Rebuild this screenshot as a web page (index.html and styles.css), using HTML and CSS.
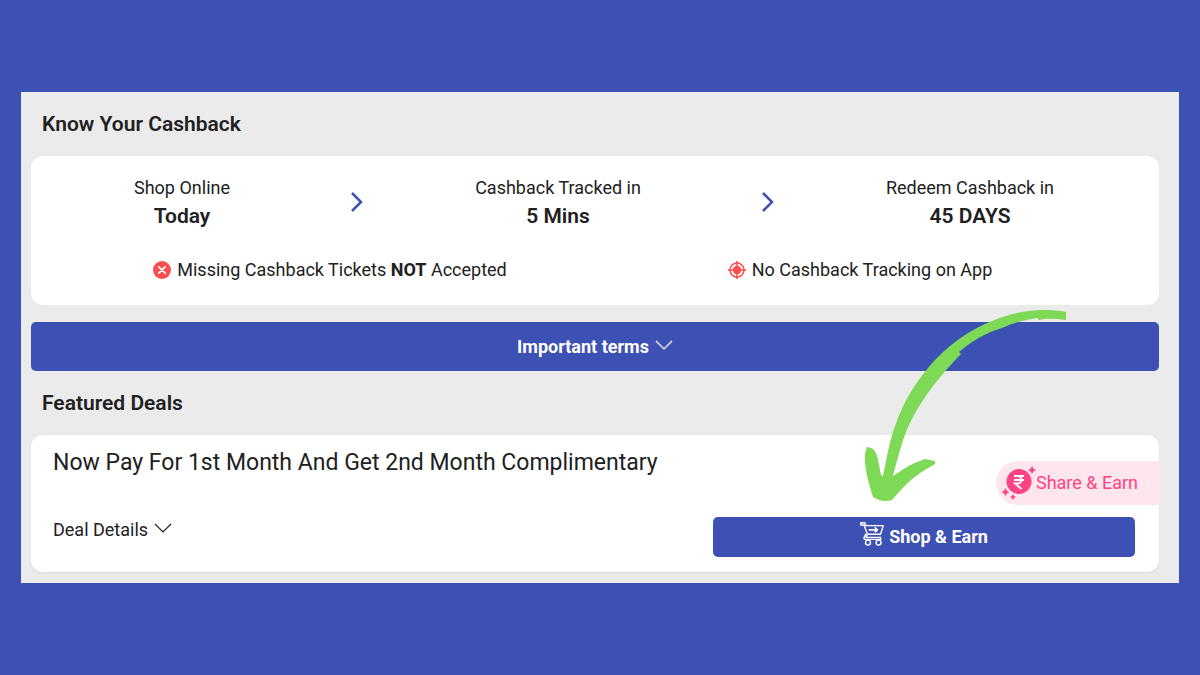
FILE: index.html
```html
<!DOCTYPE html>
<html lang="en">
<head>
    <meta charset="UTF-8">
    <meta name="viewport" content="width=device-width, initial-scale=1.0">
    <title>Know Your Cashback</title>
    <link rel="stylesheet" href="styles.css">
</head>
<body>
    <main class="panel">
        <!-- Cashback info -->
        <h2 class="section-title">Know Your Cashback</h2>
        <section class="card info-card">
            <div class="steps">
                <div class="step">
                    <p>Shop Online</p>
                    <strong>Today</strong>
                </div>
                <svg class="step-arrow" width="14" height="22" viewBox="0 0 14 22"><path d="M2 2l9 9-9 9"/></svg>
                <div class="step">
                    <p>Cashback Tracked in</p>
                    <strong>5 Mins</strong>
                </div>
                <svg class="step-arrow" width="14" height="22" viewBox="0 0 14 22"><path d="M2 2l9 9-9 9"/></svg>
                <div class="step">
                    <p>Redeem Cashback in</p>
                    <strong>45 DAYS</strong>
                </div>
            </div>
            <div class="notes">
                <p class="note">
                    <svg width="18" height="18" viewBox="0 0 18 18">
                        <circle cx="9" cy="9" r="9" fill="#ff4c4f"/>
                        <path d="M5.8 5.8l6.4 6.4M12.2 5.8l-6.4 6.4" stroke="#fff" stroke-width="1.8" stroke-linecap="round"/>
                    </svg>
                    <span>Missing Cashback Tickets <b>NOT</b> Accepted</span>
                </p>
                <p class="note">
                    <svg width="18" height="18" viewBox="0 0 18 18" fill="none" stroke="#ff4c4f" stroke-width="1.5">
                        <circle cx="9" cy="9" r="7"/>
                        <circle cx="9" cy="9" r="4.2" fill="#ff4c4f" stroke="none"/>
                        <path d="M9 0v18M0 9h18"/>
                    </svg>
                    <span>No Cashback Tracking on App</span>
                </p>
            </div>
        </section>

        <button type="button" class="terms-btn">
            Important terms
            <svg class="chevron" width="18" height="10" viewBox="0 0 18 10"><path d="M1 1l8 8 8-8"/></svg>
        </button>

        <!-- Deals -->
        <h2 class="section-title">Featured Deals</h2>
        <section class="card deal-card">
            <h3 class="deal-title">Now Pay For 1st Month And Get 2nd Month Complimentary</h3>
            <div class="deal-actions">
                <button type="button" class="details-btn">
                    Deal Details
                    <svg class="chevron" width="18" height="10" viewBox="0 0 18 10"><path d="M1 1l8 8 8-8"/></svg>
                </button>
                <button type="button" class="shop-btn">
                    <svg class="cart" width="24" height="24" viewBox="0 0 24 24" fill="none" stroke="#fff" stroke-width="1.4" stroke-linejoin="round" stroke-linecap="round">
                        <path d="M.8.8h4l1 2.8h17.4l-2.6 8.6H7.4L4 3H.8zM7.4 12.2L6 15.4h14.6v2H5.4c-1.6 0-1.8-1.2-1.2-2.2l1.4-3"/>
                        <path d="M9.4 7.8h8M15.2 5.8l2.2 2-2.2 2" stroke-width="1.7"/>
                        <circle cx="8" cy="20.6" r="2.5"/>
                        <circle cx="18.6" cy="20.6" r="2.5"/>
                    </svg>
                    <span>Shop &amp; Earn</span>
                </button>
            </div>
            <button type="button" class="share-btn">
                <svg width="35" height="36" viewBox="0 0 35 36">
                    <circle cx="18" cy="16.5" r="12.5" fill="#ff4383"/>
                    <path d="M13 11h10M13 15h10M13 11h3.5c5 0 5 7.5 0 7.5H14l6.5 5.5" fill="none" stroke="#fff" stroke-width="1.8"/>
                    <path fill="#ff4383" d="M31 1q.8 3.2 4 4-3.2.8-4 4-.8-3.2-4-4 3.2-.8 4-4zM4.500 23q.8 3.200 4 4-3.200.8-4 4-.8-3.200-4-4 3.200-.8 4-4zM12 29q.6 2.400 3 3-2.400.6-3 3-.6-2.400-3-3 2.400-.6 3-3z"/>
                </svg>
                Share &amp; Earn
            </button>
            <svg class="hand-arrow" width="206" height="194" viewBox="0 0 206 194">
                <path fill="#7ed957" d="M201 3C180-1 155 1 132 10C105 20 81 37 63 59C43 82 29 111 22 147L18 167L16 166C14 156 13 149 11 144Q8 138 2 138Q-1 145 0 153C1 166 5 178 8 188Q17 194 27 191C38 178 49 166 70 155V152L60 150C47 154 37 161 28 167C32 151 36 136 41 123C51 99 67 75 96 45L94 43C107 32 120 24 137 19C150 13 160 11 172 9L174 11C183 9 192 10 201 11Z"/>
            </svg>
        </section>
    </main>
</body>
</html>
```
FILE: styles.css
```css
* {
    box-sizing: border-box;
}
body {
    margin: 0;
    min-height: 100vh;
    padding: 0 21px;
    display: flex;
    align-items: center;
    background: #3d51b4;
    color: #212121;
    font-family: Roboto, sans-serif;
    font-size: 18px;
    line-height: 24px;
}
h2, h3, p {
    margin: 0;
}
button {
    padding: 0;
    border: 0;
    background: none;
    color: inherit;
    font: inherit;
    cursor: pointer;
}
svg {
    flex: none;
}
.panel {
    width: 100%;
    padding: 0 20px 11px 10px;
    background: #ebebeb;
}
.section-title {
    padding: 0 11px;
    font-size: 21px;
    font-weight: 600;
    line-height: 64px;
}
.card {
    background: #fff;
    border-radius: 12px;
}
.info-card {
    padding: 18px 0 23px;
}
.steps {
    display: grid;
    grid-template-columns: 302fr 48fr 354fr 66fr 338fr;
    align-items: center;
    padding-right: 20px;
}
.step {
    text-align: center;
}
.step p {
    line-height: 28px;
}
.step strong {
    font-size: 21px;
    font-weight: 600;
    line-height: 28px;
}
.step-arrow {
    justify-self: center;
    fill: none;
    stroke: #3d51b4;
    stroke-width: 2.5;
}
.notes {
    display: flex;
    padding: 0 34px;
    margin-top: 28px;
}
.note {
    flex: 1;
    display: flex;
    align-items: center;
    justify-content: center;
    gap: 6px;
}
.chevron {
    margin-bottom: 4px;
    fill: none;
    stroke: currentColor;
    stroke-width: 1.2;
}
.terms-btn {
    width: 100%;
    height: 49px;
    margin-top: 17px;
    display: flex;
    align-items: center;
    justify-content: center;
    gap: 6px;
    border-radius: 5px;
    background: #3d51b4;
    color: #fff;
    font-weight: 700;
}
.deal-card {
    position: relative;
    padding: 12px 24px 15px 22px;
    box-shadow: 0 1px 2px rgba(0, 0, 0, 0.08);
}
.deal-title {
    font-size: 23px;
    font-weight: 400;
    line-height: 32px;
}
.deal-actions {
    display: flex;
    align-items: flex-start;
    justify-content: space-between;
    margin-top: 38px;
}
.details-btn {
    display: flex;
    align-items: center;
    gap: 6px;
    line-height: 26px;
}
.shop-btn {
    width: 39%;
    height: 40px;
    display: flex;
    align-items: center;
    justify-content: center;
    gap: 5px;
    border-radius: 5px;
    background: #3d51b4;
    color: #fff;
    font-weight: 700;
}
.cart {
    margin-bottom: 7px;
}
.share-btn {
    position: absolute;
    top: 26px;
    right: -1px;
    height: 44px;
    padding: 0 22px 0 5px;
    display: flex;
    align-items: center;
    border-radius: 22px 0 0 22px;
    background: #ffe5ee;
    color: #ff4383;
}
.hand-arrow {
    position: absolute;
    right: 88px;
    bottom: 69px;
    pointer-events: none;
}
```
